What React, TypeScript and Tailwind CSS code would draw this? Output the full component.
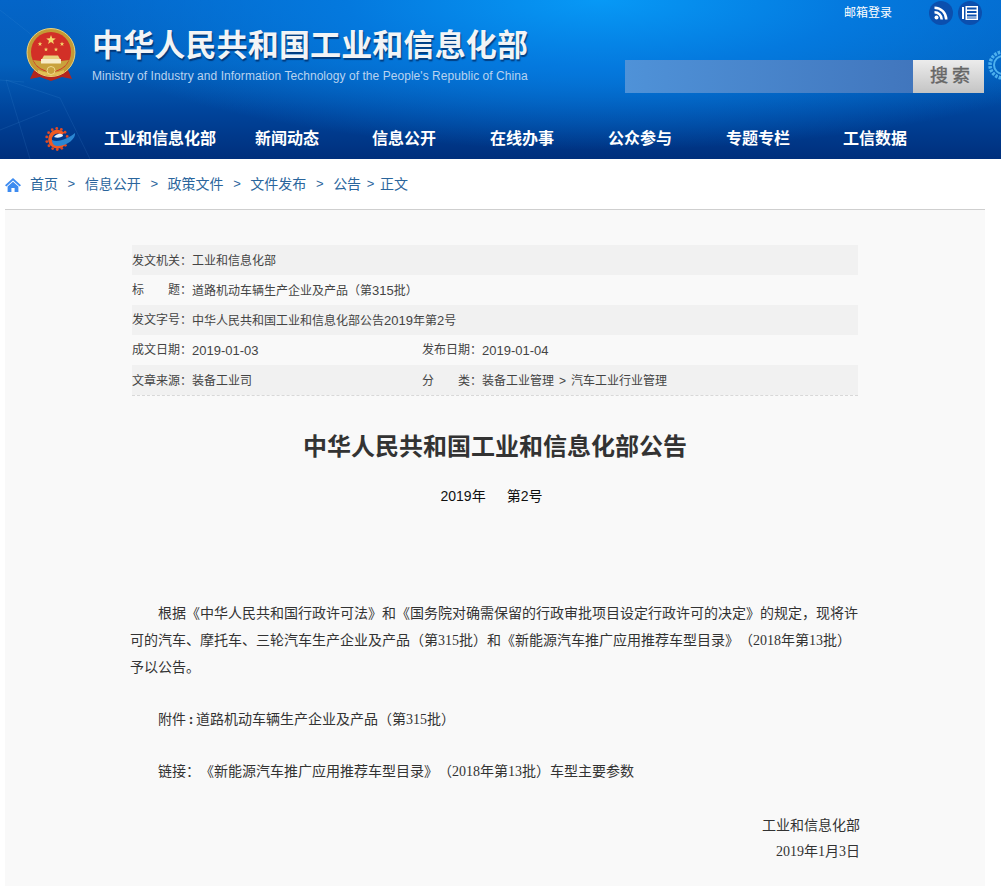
import React from "react";

const cjk = "font-['Liberation_Sans','Noto_Sans_CJK_SC',sans-serif]";
const nav = ["工业和信息化部", "新闻动态", "信息公开", "在线办事", "公众参与", "专题专栏", "工信数据"];
const navW = ["w-[151px]", "w-[117px]", "w-[118px]", "w-[118px]", "w-[118px]", "w-[117px]", "w-[120px]"];

function Emblem() {
  const stars: [number, number, number][] = [[25, 12, 5], [14, 16, 2.4], [36, 16, 2.4], [20, 21.5, 2.2], [30, 21.5, 2.2]];
  const star = (x: number, y: number, r: number) =>
    Array.from({ length: 10 }, (_, i) => {
      const a = (Math.PI / 5) * i - Math.PI / 2;
      const q = i % 2 ? r * 0.42 : r;
      return `${(x + q * Math.cos(a)).toFixed(2)},${(y + q * Math.sin(a)).toFixed(2)}`;
    }).join(" ");
  return (
    <svg width="50" height="54" viewBox="0 0 50 54" className="shrink-0">
      <path d="M8 42 L4 51 L14 49 L25 53 L36 49 L46 51 L42 42Z" fill="#b3261e" />
      <circle cx="25" cy="24.5" r="24" fill="#c49a35" stroke="#e9d27c" strokeWidth="1" />
      <circle cx="25" cy="24" r="20" fill="#d22f27" />
      <path d="M7 32 A20 20 0 0 0 43 32 L35 33 H15Z" fill="#c9a23c" />
      {stars.map(([x, y, r], i) => <polygon key={i} points={star(x, y, r)} fill="#f4d66b" />)}
      <path d="M16 31 L18 27.5 H32 L34 31Z" fill="#e9cf7c" />
      <rect x="15" y="31" width="20" height="4.5" fill="#f7ecc8" />
      <path d="M12 42 Q25 48 38 42 L38 45 Q25 51 12 45Z" fill="#e3bf55" />
      <circle cx="25" cy="42.5" r="4" fill="#c9a23c" stroke="#f0d98a" />
    </svg>
  );
}

function GearLogo() {
  const teeth = Array.from({ length: 14 }, (_, i) => {
    const a = (i / 14) * Math.PI * 2 + 0.2;
    return <circle key={i} cx={12 + 10.5 * Math.cos(a)} cy={14 + 10.5 * Math.sin(a)} r="1.4" fill="#e04a24" />;
  });
  return (
    <svg width="31" height="28" viewBox="0 0 31 28" className="shrink-0">
      {teeth}
      <path d="M18 9 A7.5 7.5 0 1 0 19 18" fill="none" stroke="#f05a22" strokeWidth="3.8" />
      <path d="M7 15 C13 18 24 13 30 8 C31 13 23 21 12 21 C9 21 7 18 7 15Z" fill="#2a86d2" />
      <path d="M9 12 C12 8 18 8 18 11 C15 13 12 13 9 12Z" fill="#dfeeff" />
    </svg>
  );
}

/* Digits in the meta table run slightly wider than the 12px CJK around them. */
function Num({ children }: { children: string }) {
  const parts = children.split(/([0-9-]+)/);
  return (
    <>
      {parts.map((p, i) => (i % 2 ? <span key={i} className="text-[13px]">{p}</span> : p))}
    </>
  );
}

function Row({ shade, label, value, label2, value2 }: { shade?: boolean; label: React.ReactNode; value: React.ReactNode; label2?: React.ReactNode; value2?: React.ReactNode }) {
  return (
    <div className={`flex h-[30px] items-center pt-[2px] text-[12px] text-[#444] ${shade ? "bg-[#f1f1f1]" : ""}`}>
      <div className={label2 ? "flex w-[290px]" : "flex"}>
        <span className="w-[60px] shrink-0">{label}</span>
        <span>{value}</span>
      </div>
      {label2 && (
        <div className="flex">
          <span className="w-[60px] shrink-0">{label2}</span>
          <span>{value2}</span>
        </div>
      )}
    </div>
  );
}

export default function App() {
  return (
    <div className={`h-[886px] overflow-hidden bg-white ${cjk}`}>
      <header className="relative h-[159px] overflow-hidden bg-[radial-gradient(ellipse_560px_150px_at_600px_0px,#0799f6_0%,#0479de_45%,transparent_100%),linear-gradient(180deg,#0465c8_0%,#0360bc_40%,#00449b_70%,#002f7c_100%)]">
        <svg className="absolute left-0 top-0" width="90" height="159" viewBox="0 0 90 159" fill="none" stroke="#4d93da" strokeOpacity="0.16">
          <path d="M0 10 L28 32 L60 60 M0 80 L24 82 M6 80 L60 98 L90 159 M6 80 L30 159 M0 130 L50 110" />
        </svg>
        <svg className="absolute right-[-14px] top-[44px]" width="28" height="42" viewBox="0 0 28 42" fill="none">
          <circle cx="16" cy="21" r="13" stroke="#4cb0ee" strokeWidth="3.5" strokeDasharray="2.5 1.2" />
          <circle cx="16" cy="21" r="9" stroke="#4cb0ee" strokeWidth="2" />
        </svg>

        <div className="relative flex h-[118px]">
          <div className="ml-[26px] mt-[28px] flex">
            <Emblem />
            <div className="ml-[16px]">
              <div className="mt-[-1px] h-[38px] whitespace-nowrap text-[31px] font-bold leading-[38px] tracking-[0.15px] text-[#f2f4f6] [text-shadow:1px_2px_1px_rgba(0,30,80,0.65)]">中华人民共和国工业和信息化部</div>
              <div className="mt-[1px] whitespace-nowrap text-[12px] leading-[20px] tracking-[0.05px] text-[#b9d3f0]">Ministry of Industry and Information Technology of the People's Republic of China</div>
            </div>
          </div>
          <div className="absolute right-[17px] top-0 flex w-[359px] flex-col items-end">
            <div className="flex h-[26px] items-center pr-[2px]">
              <span className="mr-[37px] text-[12px] text-white">邮箱登录</span>
              <span className="flex h-6 w-6 items-center justify-center rounded-full bg-[#0b4fae]">
                <svg width="14" height="14" viewBox="0 0 14 14" fill="#fff">
                  <circle cx="2.5" cy="11.5" r="2" />
                  <path d="M0.5 5 V7.6 A6 6 0 0 1 6.4 13.5 H9 A8.5 8.5 0 0 0 0.5 5Z" />
                  <path d="M0.5 0.5 V3 A10.5 10.5 0 0 1 11 13.5 H13.5 A13 13 0 0 0 0.5 0.5Z" />
                </svg>
              </span>
              <span className="ml-[5px] flex h-6 w-6 items-center justify-center rounded-full bg-[#0b4fae]">
                <svg width="16" height="14" viewBox="0 0 16 14" fill="#fff">
                  <rect x="0" y="1" width="2" height="12" />
                  <path d="M3.5 0 H16 V14 H3.5Z M5 1.5 V3.5 H14.5 V1.5Z M5 5 V7 H14.5 V5Z M5 8.5 V10.5 H14.5 V8.5Z M5 11.5 V12.5 H14.5 V11.5Z" fillRule="evenodd" />
                </svg>
              </span>
            </div>
            <div className="mt-[34px] flex h-[33px] w-[359px]">
              <div className="flex-1 bg-[linear-gradient(90deg,#4f92d8,#4176bd)]" />
              <div className="flex w-[71px] items-center justify-center bg-[linear-gradient(180deg,#ececec,#c4c4c4)] pl-[7px] text-[18px] tracking-[4px] text-[#666] [-webkit-text-stroke:0.4px_#666]">搜索</div>
            </div>
          </div>
        </div>

        <nav className="relative flex h-[41px] items-center pl-[45px] text-[16px] font-bold text-white">
          <GearLogo />
          <div className="ml-[28px] flex">
            {nav.map((n, i) => (
              <span key={n} className={`${navW[i]} whitespace-nowrap`}>{n}</span>
            ))}
          </div>
        </nav>
      </header>

      <div className="flex h-[50px] items-center pl-[5px] text-[14px] text-[#2a659c]">
        <svg width="16" height="14" viewBox="0 0 16 14" fill="#3d8bf0" className="mr-[9px] mt-[1px]">
          <path d="M8 0 L16 7.2 L14.6 8.4 L8 2.6 L1.4 8.4 L0 7.2Z" />
          <path d="M2.6 8.4 L8 3.7 L13.4 8.4 V14 H9.6 V10 H6.4 V14 H2.6Z" />
        </svg>
        <span>首页</span>
        <span className="mx-[9.6px] text-[13px]">&gt;</span>
        <span>信息公开</span>
        <span className="mx-[9.6px] text-[13px]">&gt;</span>
        <span>政策文件</span>
        <span className="mx-[9.6px] text-[13px]">&gt;</span>
        <span>文件发布</span>
        <span className="mx-[9.6px] text-[13px]">&gt;</span>
        <span>公告</span>
        <span className="mx-[5.6px] text-[13px]">&gt;</span>
        <span>正文</span>
      </div>

      <main className="mx-[5px] h-[677px] w-[980px] border-t border-[#cfcfcf] bg-[#f9f9f9] pt-[35px]">
        <div className="ml-[127px] w-[726px] border-b border-dashed border-[#d8d8d8] [text-spacing-trim:space-all]">
          <Row shade label="发文机关：" value="工业和信息化部" />
          <Row label={<span className="flex justify-between"><span>标</span><span>题：</span></span>} value={<Num>道路机动车辆生产企业及产品（第315批）</Num>} />
          <Row shade label="发文字号：" value={<Num>中华人民共和国工业和信息化部公告2019年第2号</Num>} />
          <Row label="成文日期：" value={<Num>2019-01-03</Num>} label2="发布日期：" value2={<Num>2019-01-04</Num>} />
          <Row
            shade
            label="文章来源："
            value="装备工业司"
            label2={<span className="flex justify-between"><span>分</span><span>类：</span></span>}
            value2={<>装备工业管理<span className="mx-[5px]">&gt;</span>汽车工业行业管理</>}
          />
        </div>

        <h1 className="mt-[33px] text-center text-[24px] font-bold leading-[36px] text-[#333]">中华人民共和国工业和信息化部公告</h1>
        <p className="ml-[-7px] mt-[19px] text-center text-[14px] leading-[24px] text-[#111]">2019年<span className="ml-[7px]">　</span>第2号</p>

        <div className="ml-[125px] mt-[92px] w-[730px] font-['Liberation_Serif','Noto_Sans_CJK_SC',serif] text-[14px] leading-[27px] text-[#333] [text-spacing-trim:space-all]">
          <p className="indent-[28px]">根据《中华人民共和国行政许可法》和《国务院对确需保留的行政审批项目设定行政许可的决定》的规定，现将许可的汽车、摩托车、三轮汽车生产企业及产品（第315批）和《新能源汽车推广应用推荐车型目录》（2018年第13批）予以公告。</p>
          <p className="mt-[25px] indent-[28px]">附件<span className="inline-block w-[10px] indent-0 text-center font-bold">:</span>道路机动车辆生产企业及产品（第315批）</p>
          <p className="mt-[25px] indent-[28px]">链接：《新能源汽车推广应用推荐车型目录》（2018年第13批）车型主要参数</p>
          <p className="mt-[27px] text-right">工业和信息化部</p>
          <p className="text-right leading-[26px]">2019年1月3日</p>
        </div>
      </main>
    </div>
  );
}
